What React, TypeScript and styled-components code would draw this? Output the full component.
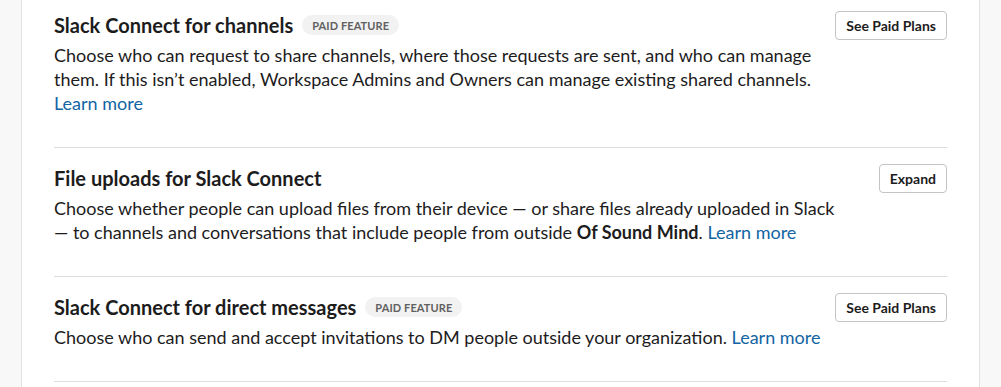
import React from "react";
import styled, { createGlobalStyle } from "styled-components";

const Global = createGlobalStyle`
  html, body { margin: 0; padding: 0; background: #f8f8f8; }
  body { font-family: Lato, "Noto Sans", sans-serif; color: #1d1c1d; -webkit-font-smoothing: antialiased; }
`;

const Page = styled.div`
  display: flex;
  height: 387px;
  overflow: hidden;
`;

const Gutter = styled.div<{ $side: "left" | "right" }>`
  width: 21px;
  flex: none;
  background: #f8f8f8;
  ${(p) => (p.$side === "left" ? "border-right: 1px solid #e2e2e2;" : "border-left: 1px solid #e2e2e2;")}
`;

const Panel = styled.main`
  flex: 1;
  background: #fff;
  padding: 0 32px;
`;

const Section = styled.section<{ $first?: boolean }>`
  padding: ${(p) => (p.$first ? "11px" : "16px")} 0 32px;
  border-bottom: 1px solid #dddddd;
`;

const Header = styled.div`
  display: flex;
  align-items: center;
  justify-content: space-between;
  height: 28px;
`;

const TitleWrap = styled.div`
  display: flex;
  align-items: center;
  gap: 9px;
`;

const Title = styled.h2`
  margin: 0;
  font-size: 20px;
  font-weight: 700;
  line-height: 26px;
  color: #1d1c1d;
`;

const Badge = styled.span`
  display: inline-flex;
  align-items: center;
  height: 20px;
  padding: 0 10px;
  border-radius: 10px;
  background: #f2f2f2;
  color: #616061;
  font-size: 11px;
  font-weight: 700;
  letter-spacing: 0.1px;
`;

const Button = styled.button`
  height: 29px;
  padding: 0 10px;
  border: 1px solid #c4c4c4;
  border-radius: 4px;
  background: #fff;
  font-family: Lato, "Noto Sans", sans-serif;
  font-size: 14px;
  font-weight: 700;
  color: #1d1c1d;
  cursor: pointer;
`;

const Desc = styled.p`
  margin: 4px 0 0;
  max-width: 790px;
  font-size: 18px;
  line-height: 24px;
  color: #1d1c1d;
`;

const Link = styled.a`
  color: #1264a3;
  text-decoration: none;
`;

export default function App() {
  return (
    <>
      <Global />
      <Page>
        <Gutter $side="left" />
        <Panel>
          <Section $first>
            <Header>
              <TitleWrap>
                <Title>Slack Connect for channels</Title>
                <Badge>PAID FEATURE</Badge>
              </TitleWrap>
              <Button>See Paid Plans</Button>
            </Header>
            <Desc>
              Choose who can request to share channels, where those requests are sent, and who can manage
              them. If this isn’t enabled, Workspace Admins and Owners can manage existing shared channels.
              <br />
              <Link href="#">Learn more</Link>
            </Desc>
          </Section>
          <Section>
            <Header>
              <TitleWrap>
                <Title>File uploads for Slack Connect</Title>
              </TitleWrap>
              <Button>Expand</Button>
            </Header>
            <Desc>
              Choose whether people can upload files from their device — or share files already uploaded in Slack
              — to channels and conversations that include people from outside <b>Of Sound Mind</b>.{" "}
              <Link href="#">Learn more</Link>
            </Desc>
          </Section>
          <Section>
            <Header>
              <TitleWrap>
                <Title>Slack Connect for direct messages</Title>
                <Badge>PAID FEATURE</Badge>
              </TitleWrap>
              <Button>See Paid Plans</Button>
            </Header>
            <Desc>
              Choose who can send and accept invitations to DM people outside your organization.{" "}
              <Link href="#">Learn more</Link>
            </Desc>
          </Section>
        </Panel>
        <Gutter $side="right" />
      </Page>
    </>
  );
}
